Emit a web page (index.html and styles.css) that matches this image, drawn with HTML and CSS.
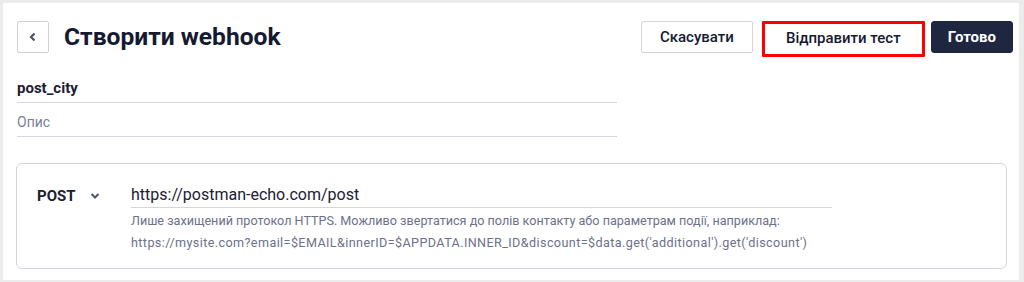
FILE: index.html
```html
<!DOCTYPE html>
<html lang="uk">
<head>
     <meta charset="UTF-8">
     <title>Створити webhook</title>
     <link rel="stylesheet" href="styles.css">
</head>
<body>
     <div id="page">
          <div class="header">
               <div class="back">
                    <svg width="10" height="10" viewBox="0 0 10 10"><path d="M6.5 1.5 L3 5 L6.5 8.5" fill="none" stroke="#4b5275" stroke-width="2.2"/></svg>
               </div>
               <h1 class="title">Створити webhook</h1>
               <div class="actions">
                    <a class="btn">Скасувати</a>
                    <a class="btn btn-test">Відправити тест</a>
                    <a class="btn btn-dark">Готово</a>
               </div>
          </div>
          <div class="fields">
               <div class="field field-name">post_city</div>
               <div class="field field-desc">Опис</div>
          </div>
          <div class="card">
               <div class="method">
                    <span>POST</span>
                    <svg width="10" height="10" viewBox="0 0 10 10"><path d="M1.5 3 L5 6.5 L8.5 3" fill="none" stroke="#4b5275" stroke-width="2"/></svg>
               </div>
               <div class="url">
                    <div class="url-input">https://postman-echo.com/post</div>
                    <div class="hint">Лише захищений протокол HTTPS. Можливо звертатися до полів контакту або параметрам події, наприклад:<br><span class="hint-url">https://mysite.com?email=$EMAIL&amp;innerID=$APPDATA.INNER_ID&amp;discount=$data.get('additional').get('discount')</span></div>
               </div>
          </div>
     </div>
</body>
</html>
```

FILE: styles.css
```css
body{
     margin: 0;
     background: #ececec;
     font-family: "Roboto", "Liberation Sans", sans-serif;
     color: #1b2033;
}
#page{
     margin: 3px 5px 0 3px;
     height: 277px;
     background: #fff;
     padding: 18px 6px 0 13px;
     box-sizing: border-box;
}
.header{
     display: flex;
     align-items: flex-start;
     padding-left: 1px;
}
.back{
     width: 32px;
     height: 32px;
     box-sizing: border-box;
     border: 1px solid #cdd0dc;
     border-radius: 2px;
     display: flex;
     align-items: center;
     justify-content: center;
}
.title{
     margin: 0 0 0 15px;
     font-size: 24.6px;
     font-weight: 700;
     line-height: 32px;
     color: #151a30;
}
.actions{
     margin-left: auto;
     display: flex;
     align-items: flex-start;
}
.btn{
     height: 32px;
     box-sizing: border-box;
     border: 1px solid #d3d6e0;
     border-radius: 2px;
     padding: 0 18px;
     font-size: 15px;
     font-weight: 500;
     line-height: 30px;
     color: #151a30;
     background: #fff;
}
.btn-test{
     margin-left: 9px;
     height: 36px;
     width: 163px;
     border: 3px solid #f00;
     border-radius: 1px;
     line-height: 28px;
     text-align: center;
     padding: 0;
}
.btn-dark{
     margin-left: 6px;
     padding: 0 16px;
     background: #1e2640;
     border-color: #1e2640;
     color: #fff;
     font-weight: 700;
     border-radius: 3px;
}
.fields{
     width: 600px;
     margin: 15px 0 0 1px;
}
.field{
     height: 33px;
     border-bottom: 1px solid #d3d6e0;
     font-size: 15px;
     line-height: 38px;
}
.field-name{
     font-weight: 700;
     height: 30px;
     line-height: 32px;
}
.field-desc{
     color: #7a7f94;
     font-size: 14px;
}
.card{
     margin-top: 26px;
     width: 991px;
     height: 106px;
     box-sizing: border-box;
     border: 1px solid #d3d6e0;
     border-radius: 6px;
     display: flex;
     padding: 20px 0 0 20px;
}
.method{
     width: 94px;
     display: flex;
     align-items: center;
     height: 23px;
     gap: 14px;
     font-size: 15px;
     font-weight: 700;
}
.url{
     width: 701px;
}
.url-input{
     font-size: 16px;
     line-height: 22px;
     height: 23px;
     border-bottom: 1px solid #d3d6e0;
}
.hint{
     margin-top: 2px;
     font-size: 12.6px;
     line-height: 22px;
     color: #6c718a;
}
.hint-url{
     letter-spacing: 0.4px;
}
```
